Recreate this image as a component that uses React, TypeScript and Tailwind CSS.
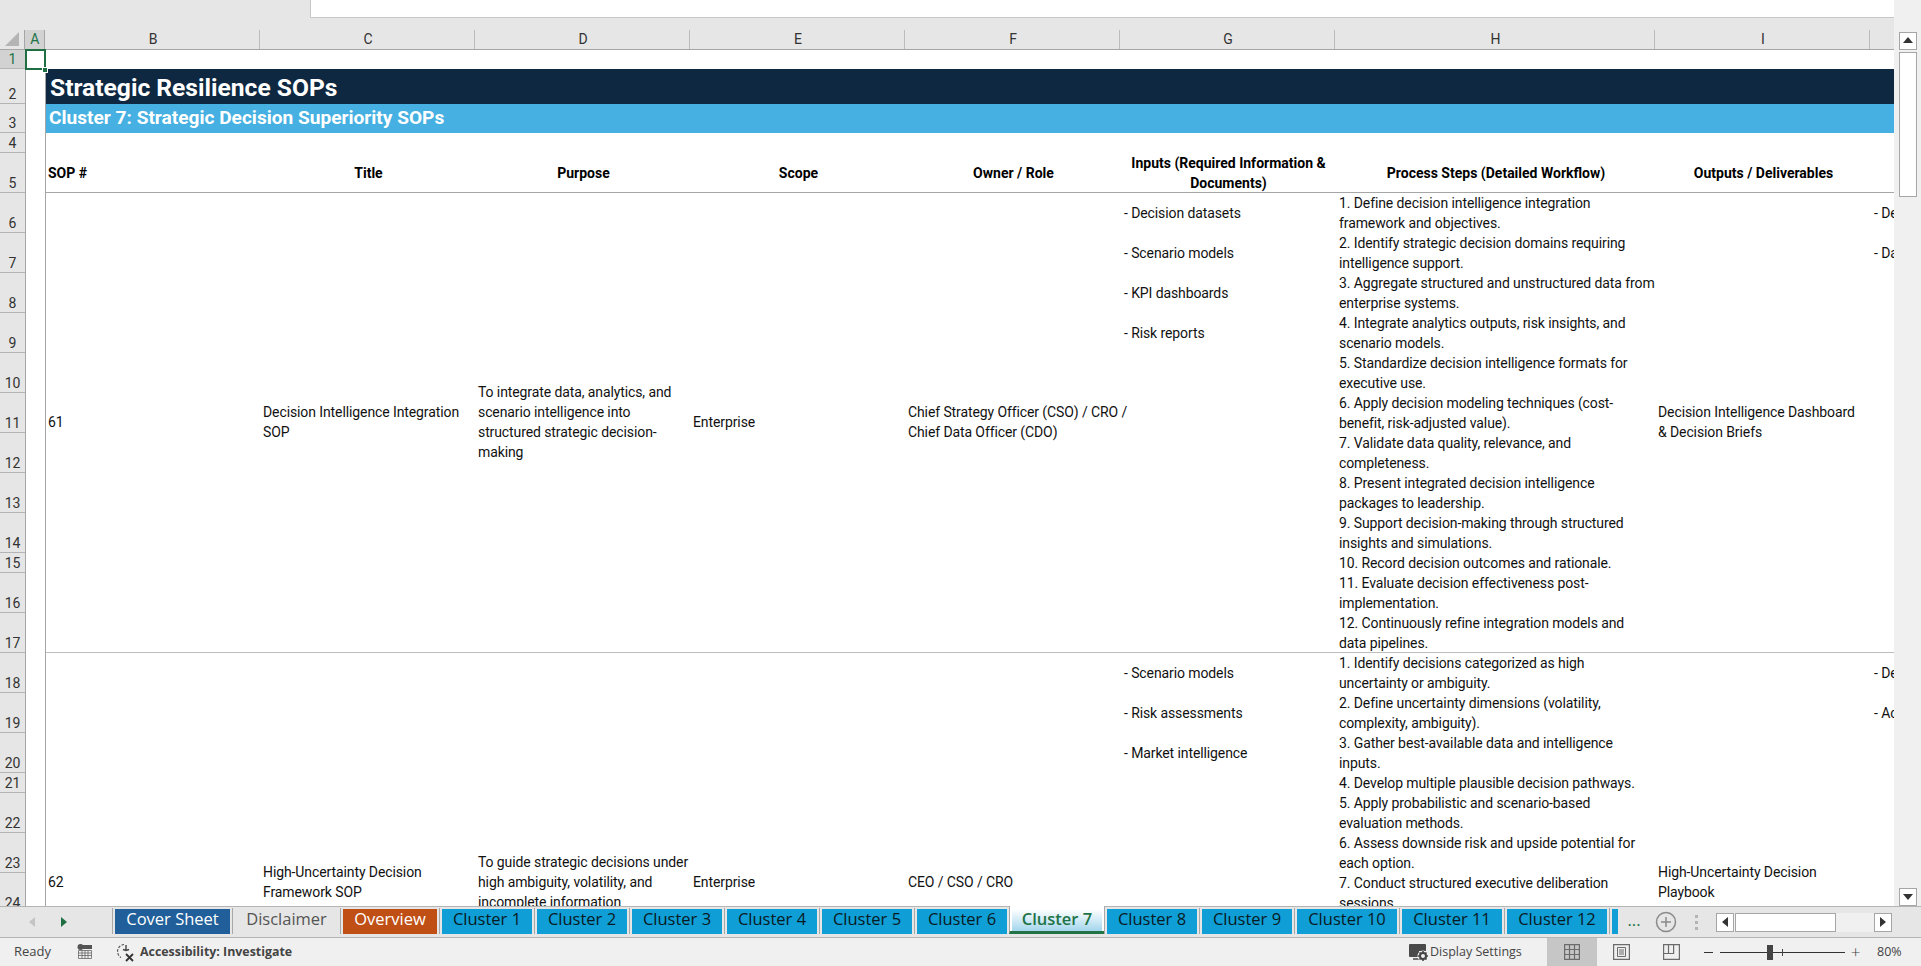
const BODY = "font-['Roboto',sans-serif]";
const UI = "font-['Open_Sans','Noto_Sans',sans-serif]";

const rowLabels = [
  { n: 1, h: "h-[19px]" },
  { n: 2, h: "h-[35px]" },
  { n: 3, h: "h-[29px]" },
  { n: 4, h: "h-[20px]" },
  { n: 5, h: "h-[40px]" },
  { n: 6, h: "h-[40px]" },
  { n: 7, h: "h-[40px]" },
  { n: 8, h: "h-[40px]" },
  { n: 9, h: "h-[40px]" },
  { n: 10, h: "h-[40px]" },
  { n: 11, h: "h-[40px]" },
  { n: 12, h: "h-[40px]" },
  { n: 13, h: "h-[40px]" },
  { n: 14, h: "h-[40px]" },
  { n: 15, h: "h-[20px]" },
  { n: 16, h: "h-[40px]" },
  { n: 17, h: "h-[40px]" },
  { n: 18, h: "h-[40px]" },
  { n: 19, h: "h-[40px]" },
  { n: 20, h: "h-[40px]" },
  { n: 21, h: "h-[20px]" },
  { n: 22, h: "h-[40px]" },
  { n: 23, h: "h-[40px]" },
  { n: 24, h: "h-[40px]" },
];

const GRID = "grid grid-cols-[215px_215px_215px_215px_215px_215px_320px_215px_24px]";

const sops = [
  {
    id: "61",
    title: "Decision Intelligence Integration SOP",
    purpose: "To integrate data, analytics, and scenario intelligence into structured strategic decision-making",
    scope: "Enterprise",
    owner: "Chief Strategy Officer (CSO) / CRO /\nChief Data Officer (CDO)",
    inputs: ["- Decision datasets", "- Scenario models", "- KPI dashboards", "- Risk reports"],
    steps: [
      "1. Define decision intelligence integration framework and objectives.",
      "2. Identify strategic decision domains requiring intelligence support.",
      "3. Aggregate structured and unstructured data from\nenterprise systems.",
      "4. Integrate analytics outputs, risk insights, and scenario models.",
      "5. Standardize decision intelligence formats for executive use.",
      "6. Apply decision modeling techniques (cost-benefit, risk-adjusted value).",
      "7. Validate data quality, relevance, and completeness.",
      "8. Present integrated decision intelligence packages to leadership.",
      "9. Support decision-making through structured insights and simulations.",
      "10. Record decision outcomes and rationale.",
      "11. Evaluate decision effectiveness post-implementation.",
      "12. Continuously refine integration models and data pipelines.",
    ],
    outputs: "Decision Intelligence Dashboard\n& Decision Briefs",
    extra: ["- De", "- Da"],
  },
  {
    id: "62",
    title: "High-Uncertainty Decision Framework SOP",
    purpose: "To guide strategic decisions under high ambiguity, volatility, and incomplete information",
    scope: "Enterprise",
    owner: "CEO / CSO / CRO",
    inputs: ["- Scenario models", "- Risk assessments", "- Market intelligence"],
    steps: [
      "1. Identify decisions categorized as high uncertainty or ambiguity.",
      "2. Define uncertainty dimensions (volatility, complexity, ambiguity).",
      "3. Gather best-available data and intelligence inputs.",
      "4. Develop multiple plausible decision pathways.",
      "5. Apply probabilistic and scenario-based evaluation methods.",
      "6. Assess downside risk and upside potential for each option.",
      "7. Conduct structured executive deliberation sessions.",
    ],
    outputs: "High-Uncertainty Decision\nPlaybook",
    extra: ["- De", "- Ac"],
  },
];

const tabs = [
  { label: "Cover Sheet", cls: "w-[115px] bg-[#215f9a] text-white" },
  { label: "Disclaimer", cls: "w-[103px] text-[#555555]" },
  { label: "Overview", cls: "w-[94px] bg-[#c04f15] text-white" },
  { label: "Cluster 1", cls: "w-[90px] bg-[#0f9ed5] text-[#0a1a24]" },
  { label: "Cluster 2", cls: "w-[90px] bg-[#0f9ed5] text-[#0a1a24]" },
  { label: "Cluster 3", cls: "w-[90px] bg-[#0f9ed5] text-[#0a1a24]" },
  { label: "Cluster 4", cls: "w-[90px] bg-[#0f9ed5] text-[#0a1a24]" },
  { label: "Cluster 5", cls: "w-[90px] bg-[#0f9ed5] text-[#0a1a24]" },
  { label: "Cluster 6", cls: "w-[90px] bg-[#0f9ed5] text-[#0a1a24]" },
];
const tabsAfter = [
  { label: "Cluster 8", cls: "w-[90px]" },
  { label: "Cluster 9", cls: "w-[90px]" },
  { label: "Cluster 10", cls: "w-[100px]" },
  { label: "Cluster 11", cls: "w-[100px]" },
  { label: "Cluster 12", cls: "w-[100px]" },
];

function Sep() {
  return <div className="mx-[2px] mb-[3px] h-[26px] w-px self-end bg-[#a8a8a8]" />;
}

function Header({ children, left }: { children: React.ReactNode; left?: boolean }) {
  return (
    <div className={`flex items-center px-[2px] text-[14px] font-bold leading-5 text-black ${left ? "justify-start" : "justify-center text-center"}`}>
      <span>{children}</span>
    </div>
  );
}

function SopRow({ sop, last }: { sop: (typeof sops)[number]; last?: boolean }) {
  const mid = "flex items-center px-[2px] pb-[2px]";
  return (
    <div className={`${GRID} h-[460px] shrink-0 text-[14px] leading-5 tracking-[-0.1px] text-[#111111] ${last ? "" : "border-b border-[#bdbdbd]"}`}>
      <div className={mid}>{sop.id}</div>
      <div className={mid}><span>{sop.title}</span></div>
      <div className={mid}><span>{sop.purpose}</span></div>
      <div className={mid}>{sop.scope}</div>
      <div className={mid}><span className="whitespace-pre">{sop.owner}</span></div>
      <div className="flex flex-col gap-5 px-[3px] pt-[10px]">
        {sop.inputs.map((t) => (
          <div key={t}>{t}</div>
        ))}
      </div>
      <div className="px-[3px]">
        {sop.steps.map((t) => (
          <div key={t} className={t.includes("\n") ? "whitespace-pre" : ""}>{t}</div>
        ))}
      </div>
      <div className={mid}><span className="whitespace-pre">{sop.outputs}</span></div>
      <div className="flex flex-col gap-5 overflow-hidden whitespace-nowrap pl-[3px] pt-[10px]">
        {sop.extra.map((t) => (
          <div key={t}>{t}</div>
        ))}
      </div>
    </div>
  );
}

function Triangle({ dir }: { dir: "up" | "down" | "left" | "right" }) {
  const pts = { up: "1,8 11,8 6,2", down: "1,3 11,3 6,9", left: "9,1 9,11 3,6", right: "3,1 3,11 9,6" }[dir];
  return (
    <svg width="12" height="12" viewBox="0 0 12 12">
      <polygon points={pts} fill="#333333" />
    </svg>
  );
}

export default function App() {
  return (
    <div className={`${BODY} flex h-[966px] w-[1921px] flex-col overflow-hidden bg-[#e6e6e6]`}>
      <div className="flex h-[906px] shrink-0">
        <div className="flex w-[1894px] shrink-0 flex-col">
          {/* formula bar remnant */}
          <div className="h-[30px] shrink-0">
            <div className="ml-[310px] h-[18px] w-[1603px] border-x border-b border-[#c8c8c8] bg-white" />
          </div>

          {/* column letters */}
          <div className="flex h-5 shrink-0 border-b border-[#a6a6a6] text-[14px] text-[#333333]">
            <div className="flex w-[25px] items-end justify-center pb-[3px]">
              <svg width="14" height="14" viewBox="0 0 14 14">
                <polygon points="14,0 14,14 0,14" fill="#b4b4b4" />
              </svg>
            </div>
            <div className="flex w-[21px] items-center justify-center border-x border-[#a6a6a6] bg-[#d2d2d2] text-[#217346]">A</div>
            <div className={`${GRID} flex-1 text-center leading-[19px]`}>
              {["B", "C", "D", "E", "F", "G", "H", "I"].map((c) => (
                <div key={c} className="border-r border-[#bcbcbc] pl-[2px]">{c}</div>
              ))}
            </div>
          </div>

          <div className="flex min-h-0 flex-1">
            {/* row numbers */}
            <div className="w-[25px] shrink-0 overflow-hidden text-center text-[14px] leading-4 text-[#333333]">
              {rowLabels.map((r) => (
                <div
                  key={r.n}
                  className={`${r.h} flex items-end justify-center border-b border-[#b4b4b4] pb-[1px] ${r.n === 1 ? "bg-[#d2d2d2] text-[#217346]" : ""}`}
                >
                  {r.n}
                </div>
              ))}
            </div>
            {/* column A */}
            <div className="relative w-[21px] shrink-0 border-x border-[#a6a6a6] bg-white">
              <div className="absolute -left-px -top-px h-[21px] w-[21px] border-2 border-[#1f6f43]" />
              <div className="absolute right-[-3px] top-[17px] h-[6px] w-[6px] border border-white bg-[#1f6f43]" />
            </div>
            {/* sheet */}
            <div className="flex min-w-0 flex-1 flex-col overflow-hidden bg-white">
              <div className="h-[19px] shrink-0" />
              <div className="flex h-[35px] shrink-0 items-center bg-[#0e2841] pl-1 pt-[3px] text-[24.6px] font-bold text-white">
                Strategic Resilience SOPs
              </div>
              <div className="flex h-[29px] shrink-0 items-center bg-[#45b0e1] pl-[3px] text-[19.1px] font-bold text-white">
                Cluster 7: Strategic Decision Superiority SOPs
              </div>
              <div className="h-5 shrink-0" />
              <div className={`${GRID} h-10 shrink-0 border-b border-[#a6a6a6]`}>
                <Header left>SOP #</Header>
                <Header>Title</Header>
                <Header>Purpose</Header>
                <Header>Scope</Header>
                <Header>Owner / Role</Header>
                <Header>Inputs (Required Information & Documents)</Header>
                <Header>Process Steps (Detailed Workflow)</Header>
                <Header>Outputs / Deliverables</Header>
              </div>
              {sops.map((s, i) => (
                <SopRow key={s.id} sop={s} last={i === sops.length - 1} />
              ))}
            </div>
          </div>
        </div>

        {/* vertical scrollbar */}
        <div className="flex w-[27px] shrink-0 flex-col bg-[#f0f0f0] pl-[5px] pr-[4px] pt-[32px]">
          <div className="flex h-[18px] items-center justify-center border border-[#a6a6a6] bg-white">
            <Triangle dir="up" />
          </div>
          <div className="mt-[2px] h-[145px] border border-[#a6a6a6] bg-white" />
          <div className="flex-1" />
          <div className="flex h-[18px] items-center justify-center border border-[#a6a6a6] bg-white">
            <Triangle dir="down" />
          </div>
        </div>
      </div>

      {/* sheet tabs */}
      <div className={`${UI} flex h-8 shrink-0 border-y border-[#b4b4b4] text-[16.5px] leading-none`}>
        <div className="flex w-[110px] shrink-0 items-center pl-[28px]">
          <svg width="8" height="12" viewBox="0 0 8 12" className="mr-6">
            <polygon points="7,1 7,11 1,6" fill="#c4c4c4" />
          </svg>
          <svg width="8" height="12" viewBox="0 0 8 12">
            <polygon points="1,1 1,11 7,6" fill="#1f6f43" />
          </svg>
        </div>
        <Sep />
        {tabs.map((t) => (
          <div key={t.label} className="flex">
            <div className={`${t.cls} mb-[3px] mt-[2px] flex items-center justify-center pb-[4px]`}>{t.label}</div>
            <Sep />
          </div>
        ))}
        <div className="-mx-[3px] -mt-px mb-[3px] w-[96px] border-x border-b-[3px] border-[#a8a8a8] border-b-[#217346] bg-white px-[2px] pt-[3px]">
          <div className="flex h-full items-center justify-center bg-gradient-to-b from-white to-[#a3d6ec] pb-[2px] font-semibold text-[#217346]">
            Cluster 7
          </div>
        </div>
        {tabsAfter.map((t) => (
          <div key={t.label} className="flex">
            <Sep />
            <div className={`${t.cls} mb-[3px] mt-[2px] flex items-center justify-center bg-[#0f9ed5] pb-[4px] text-[#0a1a24]`}>{t.label}</div>
          </div>
        ))}
        <Sep />
        <div className="mb-[3px] mt-[2px] w-[6px] bg-[#0f9ed5]" />
        <div className="ml-[6px] flex w-[20px] items-center justify-center pb-[4px] text-[#217346]">...</div>
        <div className="ml-[11px] flex items-center">
          <svg width="22" height="22" viewBox="0 0 22 22">
            <circle cx="11" cy="11" r="9.5" fill="none" stroke="#8a8a8a" strokeWidth="1.5" />
            <path d="M11 6v10M6 11h10" stroke="#8a8a8a" strokeWidth="1.5" />
          </svg>
        </div>
        <div className="ml-[18px] flex flex-col items-center justify-center gap-[3px]">
          <div className="h-[3px] w-[3px] bg-[#b4b4b4]" />
          <div className="h-[3px] w-[3px] bg-[#b4b4b4]" />
          <div className="h-[3px] w-[3px] bg-[#b4b4b4]" />
        </div>
        <div className="ml-[18px] flex h-[19px] w-[176px] self-center bg-[#f0f0f0]">
          <div className="flex w-[18px] items-center justify-center border border-[#a6a6a6] bg-white"><Triangle dir="left" /></div>
          <div className="ml-px w-[101px] border border-[#a6a6a6] bg-white" />
          <div className="flex-1" />
          <div className="flex w-[18px] items-center justify-center border border-[#a6a6a6] bg-white"><Triangle dir="right" /></div>
        </div>
      </div>

      {/* status bar */}
      <div className={`${UI} flex h-7 shrink-0 items-center bg-[#f0f0f0] text-[12.5px] text-[#444444]`}>
        <span className="ml-[14px] w-[63px] text-[13px]">Ready</span>
        <svg width="16" height="16" viewBox="0 0 16 16" className="mr-[23px]">
          <circle cx="3.5" cy="3" r="3" fill="#555555" />
          <rect x="6" y="1" width="9" height="4" fill="#555555" />
          <path d="M1.5 6.5h13v8h-13zM1.5 9h13M1.5 11.5h13M5 6.5v8M8 6.5v8M11 6.5v8" fill="none" stroke="#666666" strokeWidth="0.8" />
        </svg>
        <svg width="20" height="20" viewBox="0 0 20 20">
          <path d="M8 2.5a7 7 0 0 0-3 13" fill="none" stroke="#555555" strokeWidth="1.2" strokeDasharray="2.5 1.5" />
          <path d="M10 3v5M7 7.5l3 1 3-1" fill="none" stroke="#444444" strokeWidth="1.4" />
          <path d="M10 12l7 7M17 12l-7 7" stroke="#333333" strokeWidth="1.8" />
        </svg>
        <span className="ml-[4px] text-[12.4px] font-bold">Accessibility: Investigate</span>
        <div className="ml-auto flex h-full items-center">
          <svg width="20" height="20" viewBox="0 0 20 20">
            <path d="M1 2h15a1 1 0 0 1 1 1v6h-7v6H1a1 1 0 0 1-1-1V3a1 1 0 0 1 1-1z" fill="#4a4a4a" />
            <path d="M4 17h6" stroke="#4a4a4a" strokeWidth="1.5" />
            <circle cx="14" cy="14" r="5.5" fill="#f0f0f0" />
            <circle cx="14" cy="14" r="3" fill="none" stroke="#444444" strokeWidth="2" />
            <path d="M14 9v2M14 17v2M9 14h2M17 14h2M10.5 10.5l1.4 1.4M16.1 16.1l1.4 1.4M10.5 17.5l1.4-1.4M16.1 11.9l1.4-1.4" stroke="#444444" strokeWidth="1.6" />
          </svg>
          <span className="ml-[1px] w-[117px]">Display Settings</span>
          <div className="flex h-full w-[50px] items-center justify-center bg-[#c6c6c6]">
            <svg width="16" height="16" viewBox="0 0 16 16">
              <path d="M.6.6h14.8v14.8H.6zM5.5.6v14.8M10.5.6v14.8M.6 5.5h14.8M.6 10.5h14.8" fill="none" stroke="#6b6b6b" strokeWidth="1.2" />
            </svg>
          </div>
          <svg width="17" height="16" viewBox="0 0 17 16" className="ml-[16px]">
            <path d="M.6.6h15.8v14.8H.6z" fill="none" stroke="#6b6b6b" strokeWidth="1.2" />
            <path d="M4.5 3.5h8v9h-8zM6 6h5M6 8h5M6 10h5" fill="none" stroke="#6b6b6b" />
          </svg>
          <svg width="17" height="16" viewBox="0 0 17 16" className="ml-[33px]">
            <path d="M.6.6h15.8v14.8H.6zM.6 9.5h10V.6M5.5.6v9" fill="none" stroke="#6b6b6b" strokeWidth="1.2" />
          </svg>
          <div className="ml-[24px] h-px w-[9px] bg-[#333333]" />
          <div className="relative ml-[7px] h-px w-[125px] bg-[#333333]">
            <div className="absolute left-[47px] top-[-7px] h-[15px] w-[6px] bg-[#444444]" />
            <div className="absolute left-[62px] top-[-3px] h-[7px] w-px bg-[#444444]" />
          </div>
          <span className="ml-[5px] w-[11px] text-center text-[17px] font-light text-[#444444]">+</span>
          <span className="ml-[16px] w-[44px]">80%</span>
        </div>
      </div>
    </div>
  );
}
